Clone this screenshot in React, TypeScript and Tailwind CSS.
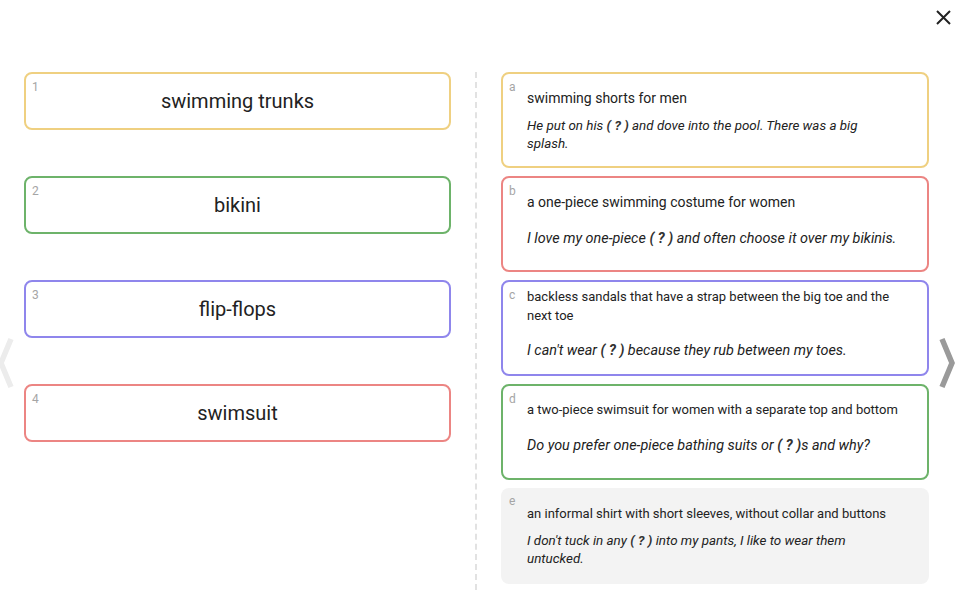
import React from 'react';

type Term = { n: number; word: string; color: string };
type Def = {
  letter: string;
  def: string;
  before: string;
  after: string;
  color?: string;
  pad: string;
  defCls: string;
  exCls: string;
};

const TERMS: Term[] = [
  { n: 1, word: 'swimming trunks', color: 'border-[#efd081]' },
  { n: 2, word: 'bikini', color: 'border-[#6db36a]' },
  { n: 3, word: 'flip-flops', color: 'border-[#8f86ec]' },
  { n: 4, word: 'swimsuit', color: 'border-[#ec8583]' },
];

// sizes differ per card: the text is fitted to the box
const DEFS: Def[] = [
  {
    letter: 'a',
    def: 'swimming shorts for men',
    before: 'He put on his ',
    after: ' and dove into the pool. There was a big splash.',
    color: 'border-[#efd081]',
    pad: 'pl-[24px] pr-[40px]',
    defCls: 'text-[14px] leading-[20px]',
    exCls: 'mt-[9px] text-[13.4px] leading-[18px]',
  },
  {
    letter: 'b',
    def: 'a one-piece swimming costume for women',
    before: 'I love my one-piece ',
    after: ' and often choose it over my bikinis.',
    color: 'border-[#ec8583]',
    pad: 'pl-[24px] pr-[24px]',
    defCls: 'text-[14px] leading-[20px]',
    exCls: 'mt-[17px] mb-[8px] text-[14.4px] leading-[20px]',
  },
  {
    letter: 'c',
    def: 'backless sandals that have a strap between the big toe and the next toe',
    before: "I can't wear ",
    after: ' because they rub between my toes.',
    color: 'border-[#8f86ec]',
    pad: 'pl-[24px] pr-[24px]',
    defCls: 'text-[13px] leading-[19px]',
    exCls: 'mt-[16px] mb-[9px] text-[14.4px] leading-[20px]',
  },
  {
    letter: 'd',
    def: 'a two-piece swimsuit for women with a separate top and bottom',
    before: 'Do you prefer one-piece bathing suits or ',
    after: 's and why?',
    color: 'border-[#6db36a]',
    pad: 'pl-[24px] pr-[24px]',
    defCls: 'text-[13px] leading-[19px]',
    exCls: 'mt-[17px] mb-[8px] text-[14.4px] leading-[20px]',
  },
  {
    letter: 'e',
    def: 'an informal shirt with short sleeves, without collar and buttons',
    before: "I don't tuck in any ",
    after: ' into my pants, I like to wear them untucked.',
    pad: 'pl-[26px] pr-[26px]',
    defCls: 'text-[13px] leading-[19px]',
    exCls: 'mt-[9px] text-[13.4px] leading-[18px]',
  },
];

const Blank = () => <span className="font-bold text-[#333]">( ? )</span>;

export default function App() {
  return (
    <div className="relative w-[964px] h-[590px] overflow-hidden bg-white font-['Roboto','Liberation_Sans',sans-serif] text-[#222]">
      {/* close */}
      <button className="absolute left-[936px] top-[10px] w-[15px] h-[15px]">
        <svg width="15" height="15" viewBox="0 0 15 15" fill="none" stroke="#222" strokeWidth="2">
          <path d="M1 1 14 14M14 1 1 14" />
        </svg>
      </button>

      {/* side arrows */}
      <svg className="absolute left-0 top-[336px]" width="14" height="54" viewBox="0 0 14 54" fill="none" stroke="#ececec" strokeWidth="5.5">
        <polyline points="11,3 1,27 11,51" />
      </svg>
      <svg className="absolute left-[938px] top-[336px]" width="20" height="54" viewBox="0 0 20 54" fill="none" stroke="#9a9a9a" strokeWidth="5.5">
        <polyline points="4,3 14,27 4,51" />
      </svg>

      <div className="flex pt-[72px] pl-[24px]">
        {/* terms */}
        <div className="w-[427px] flex flex-col gap-[46px]">
          {TERMS.map((t) => (
            <div
              key={t.n}
              className={`relative h-[58px] border-2 rounded-lg flex items-center justify-center ${t.color}`}
            >
              <span className="absolute left-[6px] top-[6px] text-[12px] leading-[14px] text-[#a5a5a5]">{t.n}</span>
              <span className="text-[20px] leading-[24px]">{t.word}</span>
            </div>
          ))}
        </div>

        {/* divider */}
        <div className="w-[50px] flex justify-center">
          <div className="h-[518px] border-l-2 border-dashed border-[#e2e2e2]" />
        </div>

        {/* definitions */}
        <div className="w-[428px] flex flex-col gap-[8px]">
          {DEFS.map((d) => (
            <div
              key={d.letter}
              className={`relative h-[96px] rounded-lg flex flex-col justify-center ${d.pad} ${
                d.color ? `border-2 ${d.color}` : 'bg-[#f3f3f3]'
              }`}
            >
              <span
                className={`absolute top-[6px] text-[12px] leading-[14px] text-[#a5a5a5] ${
                  d.color ? 'left-[6px]' : 'left-[8px]'
                }`}
              >
                {d.letter}
              </span>
              <p className={d.defCls}>{d.def}</p>
              <p className={`italic ${d.exCls}`}>
                {d.before}
                <Blank />
                {d.after}
              </p>
            </div>
          ))}
        </div>
      </div>
    </div>
  );
}
